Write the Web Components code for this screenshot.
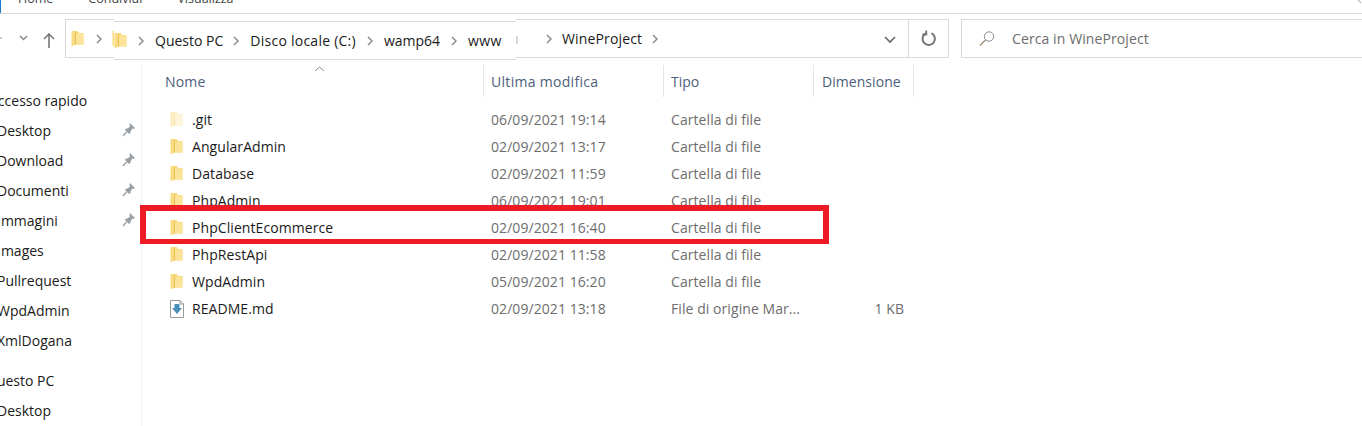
<!DOCTYPE html>
<html lang="it">
<head>
<meta charset="utf-8">
<title>WineProject</title>
<style>
html, body { margin: 0; height: 100%; background: #fff; overflow: hidden; }
body { font-family: "Open Sans", "Noto Sans", sans-serif; font-size: 14px; color: #1a1a1a; }
</style>
</head>
<body>
<template id="folder-tpl">
<style>
:host { display: inline-flex; width: 13px; height: 17px; flex: none; }
svg { display: block; }
</style>
<svg width="13" height="17" viewBox="0 0 13 17">
  <path d="M1 1H6.5L8 3H12.5V14.5H1Z" fill="var(--folder-back, #f8d877)"/>
  <path d="M5 3.5H12.5V14.5H5Z" fill="var(--folder-front, #fbe39a)"/>
  <path d="M0.5 1L4.5 2.5V14.5L0.5 16.5Z" fill="var(--folder-flap, #f9dc82)"/>
  <path d="M4.5 2.5V14.5" stroke="var(--folder-edge, #e9bd4f)" stroke-width="1"/>
</svg>
</template>

<x-ribbon>
  <span>Home</span><span>Condividi</span><span>Visualizza</span>
</x-ribbon>

<x-navbar>
  <x-crumb-patch>
    <span>Questo PC</span><span style="letter-spacing:.25px">Disco locale (C:)</span><span>wamp64</span><span style="letter-spacing:.3px">www</span>
  </x-crumb-patch>
</x-navbar>

<x-main>
  <x-sidebar>
    <x-side-item head>Accesso rapido</x-side-item>
    <x-side-item pinned>Desktop</x-side-item>
    <x-side-item pinned>Download</x-side-item>
    <x-side-item pinned>Documenti</x-side-item>
    <x-side-item pinned>Immagini</x-side-item>
    <x-side-item>Images</x-side-item>
    <x-side-item>Pullrequest</x-side-item>
    <x-side-item>WpdAdmin</x-side-item>
    <x-side-item>XmlDogana</x-side-item>
    <x-side-item head gap style="margin-left:-14px">Questo PC</x-side-item>
    <x-side-item>Desktop</x-side-item>
  </x-sidebar>
  <x-file-list>
    <x-file-row name=".git" date="06/09/2021 19:14" type="Cartella di file" icon="pale"></x-file-row>
    <x-file-row name="AngularAdmin" date="02/09/2021 13:17" type="Cartella di file"></x-file-row>
    <x-file-row name="Database" date="02/09/2021 11:59" type="Cartella di file"></x-file-row>
    <x-file-row name="PhpAdmin" date="06/09/2021 19:01" type="Cartella di file"></x-file-row>
    <x-file-row name="PhpClientEcommerce" date="02/09/2021 16:40" type="Cartella di file"></x-file-row>
    <x-file-row name="PhpRestApi" date="02/09/2021 11:58" type="Cartella di file"></x-file-row>
    <x-file-row name="WpdAdmin" date="05/09/2021 16:20" type="Cartella di file"></x-file-row>
    <x-file-row name="README.md" date="02/09/2021 13:18" type="File di origine Mar..." size="1 KB" icon="md"></x-file-row>
  </x-file-list>
</x-main>

<script>
const CHEVRON = '<path d="M1 1L5 5L1 9" stroke="#8a8a8a" stroke-width="1.5" fill="none"/>';

class XFolder extends HTMLElement {
  constructor() {
    super();
    this.attachShadow({ mode: 'open' });
    this.shadowRoot.appendChild(document.getElementById('folder-tpl').content.cloneNode(true));
  }
}
customElements.define('x-folder', XFolder);

class XRibbon extends HTMLElement {
  constructor() {
    super();
    this.attachShadow({ mode: 'open' });
    this.shadowRoot.innerHTML = `
    <style>
      :host { display: flex; height: 13px; border-bottom: 1px solid #d9d9d9; overflow: hidden; position: relative; align-items: flex-start; }
      .tabs { display: flex; gap: 35px; padding-left: 18px; line-height: 20px; margin-top: -11px; font-size: 12.5px; color: #444; }
      .blue { width: 1px; height: 13px; background: #1979ca; position: absolute; left: 0; top: 0; }
      svg { position: absolute; right: 0; top: 0; }
    </style>
    <div class="blue"></div>
    <div class="tabs"><slot></slot></div>
    <svg width="4" height="4" viewBox="0 0 4 4"><path d="M0 0L3 3" stroke="#999" fill="none"/></svg>`;
  }
}
customElements.define('x-ribbon', XRibbon);

class XNavbar extends HTMLElement {
  constructor() {
    super();
    this.attachShadow({ mode: 'open' });
    this.shadowRoot.innerHTML = `
    <style>
      :host { display: flex; height: 39px; margin-top: 5px; position: relative; align-items: stretch; }
      .buttons { width: 65px; flex: none; position: relative; }
      .buttons svg { position: absolute; }
      .addr { width: 884px; flex: none; box-sizing: border-box; border: 1px solid #d9d9d9; display: flex; align-items: center; position: relative; }
      .path { flex: 1; display: flex; align-items: center; min-width: 0; padding-left: 5px; }
      .wine { color: #1a1a1a; letter-spacing: .15px; }
      .frag { position: absolute; left: 450px; top: 16px; width: 2px; height: 8px; background: #d4d4d4; }
      .drop { width: 36px; display: flex; justify-content: center; padding-top: 2px; }
      .refresh { width: 38px; padding-left: 1px; align-self: stretch; border-left: 1px solid #d9d9d9; display: flex; align-items: center; justify-content: center; flex: none; }
      .search { margin-left: 12px; flex: 1; box-sizing: border-box; border: 1px solid #d9d9d9; border-right: 0; display: flex; align-items: center; color: #6d6d6d; padding-left: 17px; gap: 17px; letter-spacing: .1px; }
    </style>
    <div class="buttons">
      <svg style="left:-4px;top:17px" width="6" height="4" viewBox="0 0 6 4"><path d="M0 2H6" stroke="#bbb" stroke-width="1.5"/></svg>
      <svg style="left:19px;top:16px" width="9" height="6" viewBox="0 0 9 6"><path d="M1 1L4.5 4.5L8 1" stroke="#8a8a8a" stroke-width="1.5" fill="none"/></svg>
      <svg style="left:43px;top:14px" width="12" height="15" viewBox="0 0 12 15"><path d="M6 15V1M1 6L6 1L11 6" stroke="#777" stroke-width="1.6" fill="none"/></svg>
    </div>
    <div class="addr">
      <div class="path">
        <x-folder></x-folder>
        <svg style="margin-left:12px" width="6" height="10" viewBox="0 0 6 10">${CHEVRON}</svg>
        <x-folder style="margin-left:10px"></x-folder>
        <svg style="margin-left:421px" width="6" height="10" viewBox="0 0 6 10">${CHEVRON}</svg>
        <span class="wine" style="margin-left:10px">WineProject</span>
        <svg style="margin-left:10px" width="6" height="10" viewBox="0 0 6 10">${CHEVRON}</svg>
      </div>
      <div class="frag"></div>
      <div class="drop"><svg width="12" height="8" viewBox="0 0 12 8"><path d="M1 1L6 6L11 1" stroke="#666" stroke-width="1.6" fill="none"/></svg></div>
      <div class="refresh"><svg width="16" height="17" viewBox="0 0 16 17"><path d="M10.5 3.2A6.2 6.2 0 1 1 4.6 3.4" stroke="#777" stroke-width="2" fill="none"/><path d="M5.2 0.5V4.4H1.5" stroke="#777" stroke-width="2" fill="none"/></svg></div>
    </div>
    <div class="search">
      <svg width="16" height="15" viewBox="0 0 16 15"><circle cx="10" cy="5.5" r="4.7" stroke="#8a8a8a" fill="none"/><path d="M6.5 9L1 14.5" stroke="#a08a70" stroke-width="1.2"/></svg>
      <span>Cerca in WineProject</span>
    </div>
    <slot></slot>`;
  }
}
customElements.define('x-navbar', XNavbar);

// striscia incollata sopra il percorso
class XCrumbPatch extends HTMLElement {
  constructor() {
    super();
    this.attachShadow({ mode: 'open' });
    this.shadowRoot.innerHTML = `
    <style>
      :host { position: absolute; left: 114px; top: 2px; width: 402px; height: 39px; box-sizing: border-box; background: #fff; box-shadow: 0 -2px 0 #fff; border-top: 1px solid #d9d9d9; border-bottom: 1px solid #d9d9d9; display: flex; align-items: center; }
      ::slotted(span) { color: #1a1a1a; white-space: nowrap; }
      ::slotted(x-folder) { position: absolute; left: 0; top: 10px; }
    </style>
    <slot></slot>`;
    // cartella e frecce tra i pezzi del percorso
    [...this.children].forEach((k, i) => {
      const svg = document.createElementNS('http://www.w3.org/2000/svg', 'svg');
      svg.setAttribute('width', '6');
      svg.setAttribute('height', '10');
      svg.setAttribute('viewBox', '0 0 6 10');
      svg.style.cssText = `flex:none;margin-left:${[24, 10, 11, 11][i]}px;margin-right:11px`;
      svg.innerHTML = CHEVRON;
      this.insertBefore(svg, k);
    });
    this.insertBefore(document.createElement('x-folder'), this.firstChild);
  }
}
customElements.define('x-crumb-patch', XCrumbPatch);

class XMain extends HTMLElement {
  constructor() {
    super();
    this.attachShadow({ mode: 'open' });
    this.shadowRoot.innerHTML = `
    <style>
      :host { display: flex; margin-top: 7px; height: 362px; }
    </style>
    <slot></slot>`;
  }
}
customElements.define('x-main', XMain);

class XSidebar extends HTMLElement {
  constructor() {
    super();
    this.attachShadow({ mode: 'open' });
    this.shadowRoot.innerHTML = `
    <style>
      :host { display: block; width: 141px; flex: none; border-right: 1px solid #f0f0f0; overflow: hidden; padding-top: 20px; }
    </style>
    <slot></slot>`;
  }
}
customElements.define('x-sidebar', XSidebar);

class XSideItem extends HTMLElement {
  constructor() {
    super();
    this.attachShadow({ mode: 'open' });
    this.shadowRoot.innerHTML = `
    <style>
      :host { display: flex; height: 30px; align-items: center; margin-left: -3px; position: relative; white-space: nowrap; }
      :host([head]) { margin-left: -11px; }
      :host([gap]) { margin-top: 10px; }
      svg { position: absolute; left: 125px; top: 7px; }
    </style>
    <slot></slot>
    ${this.hasAttribute('pinned') ? '<svg width="14" height="15" viewBox="0 0 14 15"><path d="M8 1L13 6L11.5 7L10.5 6.5L8.5 9.5L8.5 11L7 12L3 8L4 6.5H5.5L8 4.5L7.5 3Z" fill="#98a0a6"/><path d="M4.5 10L1 14" stroke="#98a0a6" stroke-width="1.4"/></svg>' : ''}`;
  }
}
customElements.define('x-side-item', XSideItem);

class XFileList extends HTMLElement {
  constructor() {
    super();
    this.attachShadow({ mode: 'open' });
    this.shadowRoot.innerHTML = `
    <style>
      :host { display: block; flex: 1; position: relative; }
      .head { display: grid; grid-template-columns: 342px 180px 150px 100px; height: 32px; color: #4c607a; }
      .head div { border-right: 1px solid #e5e5e5; padding-left: 7px; display: flex; align-items: center; position: relative; }
      .head div:first-child { padding-left: 23px; letter-spacing: .2px; }
      .head div:nth-child(2) { letter-spacing: .3px; }
      .head div:last-child { padding-left: 8px; letter-spacing: .05px; }
      .caret { position: absolute; left: 172px; top: 1px; }
      .rows { padding-top: 9px; }
      .mark { position: absolute; left: -2px; top: 140px; width: 689px; height: 39px; box-sizing: border-box; border: solid #ed1c24; border-width: 6px 6px 5px 6px; }
    </style>
    <div class="head">
      <div>Nome<svg class="caret" width="11" height="6" viewBox="0 0 11 6"><path d="M1 5L5.5 1L10 5" stroke="#8a8a8a" fill="none"/></svg></div>
      <div>Ultima modifica</div><div>Tipo</div><div>Dimensione</div>
    </div>
    <div class="rows"><slot></slot></div>
    <div class="mark"></div>`;
  }
}
customElements.define('x-file-list', XFileList);

class XFileRow extends HTMLElement {
  constructor() {
    super();
    this.attachShadow({ mode: 'open' });
    const icon = this.getAttribute('icon');
    let ico = '<x-folder></x-folder>';
    if (icon == 'pale') ico = '<x-folder style="--folder-back:#fdf0c8;--folder-front:#fef5da;--folder-flap:#fdeec2;--folder-edge:#f7e3ae"></x-folder>';
    if (icon == 'md') ico = '<svg style="margin-right:-1px" width="14" height="18" viewBox="0 0 14 18"><path d="M0.5 0.5H10L13.5 4V17.5H0.5Z" fill="#fff" stroke="#9a9a9a"/><path d="M10 0.5V4H13.5" fill="none" stroke="#9a9a9a"/><path d="M4.5 4H9.5V8H12L7 14L2 8H4.5Z" fill="#4a8db5"/></svg>';
    this.shadowRoot.innerHTML = `
    <style>
      :host { display: grid; grid-template-columns: 341px 180px 150px 100px; height: 27px; align-items: center; color: #6d6d6d; white-space: nowrap; letter-spacing: .07px; }
      .name { display: flex; align-items: center; padding-left: 28px; gap: 9px; color: #1a1a1a; }
      .c { padding-left: 8px; }
      .size { text-align: right; padding-right: 9px; }
    </style>
    <div class="name">${ico}<span>${this.getAttribute('name')}</span></div>
    <div class="c">${this.getAttribute('date')}</div>
    <div class="c">${this.getAttribute('type')}</div>
    <div class="size">${this.getAttribute('size') || ''}</div>`;
  }
}
customElements.define('x-file-row', XFileRow);
</script>
</body>
</html>
